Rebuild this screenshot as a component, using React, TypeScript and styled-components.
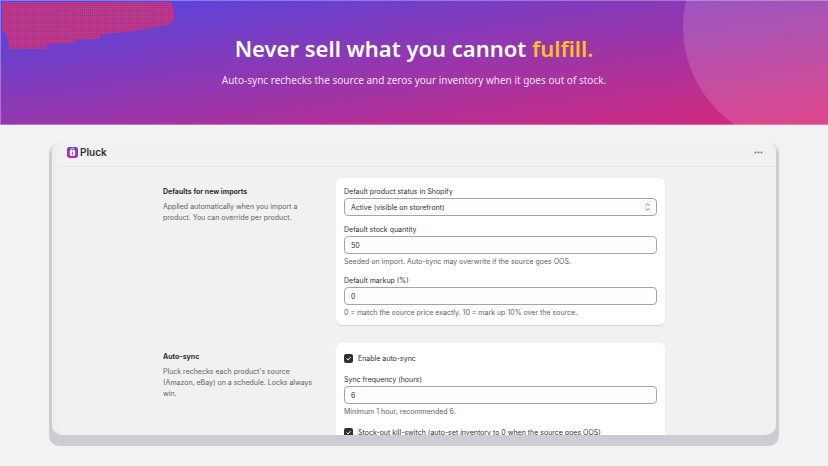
import React from "react";
import styled, { createGlobalStyle } from "styled-components";

const Global = createGlobalStyle`
  * { box-sizing: border-box; }
  body { margin: 0; background: #f1f2f4; font-family: Inter, "Liberation Sans", sans-serif; }
  h1, h2, p { margin: 0; }
`;

const Page = styled.div`
  display: flex;
  flex-direction: column;
  height: 100vh;
`;

const Hero = styled.header`
  position: relative;
  overflow: hidden;
  flex: none;
  display: flex;
  flex-direction: column;
  align-items: center;
  gap: 7px;
  padding: 31px 16px 37px;
  color: #fff;
  text-align: center;
  font-family: "Noto Sans", "Open Sans", sans-serif;
  background: linear-gradient(to bottom right, #4f46e5, #db2777);
  box-shadow: inset 1px 1px 0 rgba(255, 255, 255, 0.3), inset 0 -1px 0 rgba(255, 255, 255, 0.3);
`;

const Disc = styled.div`
  position: absolute;
  top: -91px;
  right: -91px;
  width: 236px;
  height: 236px;
  border-radius: 50%;
  background: rgba(255, 255, 255, 0.15);
`;

const Texture = styled.svg`
  position: absolute;
  top: 0;
  left: 0;
`;

const Title = styled.h1`
  position: relative;
  font-size: 22px;
  line-height: 34px;
  font-weight: 600;
`;

const Accent = styled.span`
  color: #fbbf24;
`;

const Subtitle = styled.p`
  position: relative;
  font-size: 10px;
  line-height: 16px;
  color: rgba(255, 255, 255, 0.88);
`;

const Stage = styled.main`
  flex: 1;
  min-height: 0;
  display: flex;
  padding: 17px 49px 20px;
`;

const Frame = styled.div`
  flex: 1;
  min-width: 0;
  display: flex;
  padding: 0 3px 11px;
  border-radius: 10px;
  background: linear-gradient(#f1f2f4 0, #cacdd2 12px);
`;

const Window = styled.section`
  flex: 1;
  min-width: 0;
  overflow: hidden;
  border-radius: 10px;
  box-shadow: inset 5px 0 0 #ededed;
  background: #f1f1f1;
`;

const AppBar = styled.div`
  display: flex;
  align-items: center;
  justify-content: space-between;
  height: 25px;
  margin-left: 5px;
  padding: 0 13px 4px 10px;
  border-bottom: 1px solid #e7e7e7;
`;

const Brand = styled.div`
  display: flex;
  align-items: center;
  gap: 2px;
  font-size: 10px;
  line-height: 12px;
  font-weight: 600;
  color: #303030;
`;

const MenuButton = styled.button`
  display: flex;
  padding: 0;
  border: 0;
  background: none;
`;

const Settings = styled.div`
  width: 70%;
  max-width: 502px;
  margin: 0 auto;
  padding-top: 11px;
`;

const Section = styled.section`
  display: grid;
  grid-template-columns: 150px 1fr;
  column-gap: 23px;
  padding-bottom: 8px;
  margin-bottom: 9px;
  border-bottom: 1px solid #ececec;
`;

const Intro = styled.div`
  padding-top: 8px;
`;

const SectionTitle = styled.h2`
  font-size: 7px;
  line-height: 11px;
  font-weight: 700;
  color: #303030;
`;

const Description = styled.p`
  margin-top: 4px;
  font-size: 7px;
  line-height: 11px;
  color: #616161;
`;

const Card = styled.div`
  display: flex;
  flex-direction: column;
  gap: 8px;
  padding: 8px 8px 7px;
  border-radius: 6px;
  background: #fff;
  box-shadow: 0 1px 1px rgba(0, 0, 0, 0.12);
`;

const Field = styled.div`
  display: flex;
  flex-direction: column;
`;

const Label = styled.label`
  margin-bottom: 1px;
  font-size: 7px;
  line-height: 11px;
  color: #303030;
`;

const Control = styled.div`
  position: relative;
  display: flex;

  input, select {
    width: 100%;
    height: 18px;
    padding: 0 6px;
    border: 1px solid #a4a4a8;
    border-radius: 4px;
    background: #fdfdfd;
    color: #303030;
    font: 7px Inter, "Liberation Sans", sans-serif;
    appearance: none;
  }
`;

const SelectIcon = styled.svg`
  position: absolute;
  right: 6px;
  top: 4px;
  pointer-events: none;
`;

const Hint = styled.p`
  margin-top: 2px;
  font-size: 7px;
  line-height: 11px;
  color: #616161;
`;

const Check = styled.label`
  display: flex;
  align-items: center;
  gap: 5px;
  height: 15px;
  font-size: 7px;
  line-height: 11px;
  color: #303030;
`;

const CheckBox = styled.span`
  position: relative;
  display: flex;
  width: 9px;
  height: 9px;

  input {
    appearance: none;
    width: 9px;
    height: 9px;
    margin: 0;
    border-radius: 2px;
    background: #303030;
  }

  svg {
    position: absolute;
    inset: 0;
    pointer-events: none;
  }
`;

function TextField({ id, label, value, hint }: { id: string; label: string; value: string; hint: string }) {
  return (
    <Field>
      <Label htmlFor={id}>{label}</Label>
      <Control>
        <input id={id} defaultValue={value} aria-describedby={`${id}-hint`} />
      </Control>
      <Hint id={`${id}-hint`}>{hint}</Hint>
    </Field>
  );
}

function CheckField({ label }: { label: string }) {
  return (
    <Check>
      <CheckBox>
        <input type="checkbox" defaultChecked />
        <svg width="9" height="9" viewBox="0 0 9 9" fill="none" stroke="#fff" strokeWidth="1">
          <path d="M2.6 4.6 4 5.9 6.6 3.1" />
        </svg>
      </CheckBox>
      {label}
    </Check>
  );
}

function Logo() {
  return (
    <svg width="11" height="11" viewBox="0 0 11 11" aria-hidden="true">
      <defs>
        <linearGradient id="logo" x1="1" y1="0" x2="0" y2="1">
          <stop offset="0" stopColor="#4f46e5" />
          <stop offset="1" stopColor="#db2777" />
        </linearGradient>
      </defs>
      <rect width="11" height="11" rx="2.4" fill="url(#logo)" />
      <path d="M4 3.4V2.8a1.5 1.5 0 0 1 3 0v.6" fill="none" stroke="#fff" strokeWidth=".8" />
      <rect x="2.8" y="3.2" width="5.4" height="5.6" rx=".8" fill="#fff" />
      <path d="M5.5 4.5v2.8M4.6 6.4l.9 1 .9-1" fill="none" stroke="#8b3bc0" strokeWidth=".8" />
    </svg>
  );
}

const dotRows = Array.from({ length: 25 }, (_, row) => `M3 ${row * 2 + 0.5}H176`).join("");

export default function App() {
  return (
    <Page>
      <Global />
      <Hero>
        <Texture width="176" height="50" viewBox="0 0 176 50" aria-hidden="true">
          <defs>
            <clipPath id="patch">
              <path d="M2 2H171L174 10V20L171 24L153 28L126 32L100 35V39L74 40V43L47 44L46 49H9L7 35L2 31Z" />
            </clipPath>
          </defs>
          <g clipPath="url(#patch)">
            <rect width="176" height="50" fill="#c02a8d" />
            <path d={dotRows} stroke="#9d5a88" strokeWidth="1" strokeDasharray="1 1" />
            <path
              d="M17 18.5H29M15 26.5H27M35 24.5H51M59 14.5H73M55 28.5H69M81 8.5H103M81 14.5H101M109 6.5H149M111 12.5H149M111 16.5H149"
              stroke="#6f7a70"
              strokeWidth="1"
              strokeDasharray="1 1"
            />
          </g>
        </Texture>
        <Disc />
        <Title>
          Never sell what you cannot <Accent>fulfill.</Accent>
        </Title>
        <Subtitle>Auto-sync rechecks the source and zeros your inventory when it goes out of stock.</Subtitle>
      </Hero>
      <Stage>
        <Frame>
          <Window>
            <AppBar>
              <Brand>
                <Logo />
                Pluck
              </Brand>
              <MenuButton aria-label="More actions">
                <svg width="9" height="3" viewBox="0 0 9 3" fill="#777">
                  <circle cx="1.5" cy="1.5" r="1" />
                  <circle cx="4.5" cy="1.5" r="1" />
                  <circle cx="7.5" cy="1.5" r="1" />
                </svg>
              </MenuButton>
            </AppBar>
            <Settings>
              <Section>
                <Intro>
                  <SectionTitle>Defaults for new imports</SectionTitle>
                  <Description>
                    Applied automatically when you import a product. You can override per product.
                  </Description>
                </Intro>
                <Card>
                  <Field>
                    <Label htmlFor="status">Default product status in Shopify</Label>
                    <Control>
                      <select id="status">
                        <option>Active (visible on storefront)</option>
                      </select>
                      <SelectIcon width="7" height="10" viewBox="0 0 7 10" fill="none" stroke="#666" strokeWidth=".9">
                        <path d="M1.7 3.6 3.5 1.8l1.8 1.8M1.7 6.4l1.8 1.8 1.8-1.8" />
                      </SelectIcon>
                    </Control>
                  </Field>
                  <TextField
                    id="stock"
                    label="Default stock quantity"
                    value="50"
                    hint="Seeded on import. Auto-sync may overwrite if the source goes OOS."
                  />
                  <TextField
                    id="markup"
                    label="Default markup (%)"
                    value="0"
                    hint="0 = match the source price exactly. 10 = mark up 10% over the source."
                  />
                </Card>
              </Section>
              <Section>
                <Intro>
                  <SectionTitle>Auto-sync</SectionTitle>
                  <Description>
                    Pluck rechecks each product's source (Amazon, eBay) on a schedule. Locks always win.
                  </Description>
                </Intro>
                <Card>
                  <CheckField label="Enable auto-sync" />
                  <TextField id="frequency" label="Sync frequency (hours)" value="6" hint="Minimum 1 hour, recommended 6." />
                  <CheckField label="Stock-out kill-switch (auto-set inventory to 0 when the source goes OOS)" />
                </Card>
              </Section>
            </Settings>
          </Window>
        </Frame>
      </Stage>
    </Page>
  );
}
